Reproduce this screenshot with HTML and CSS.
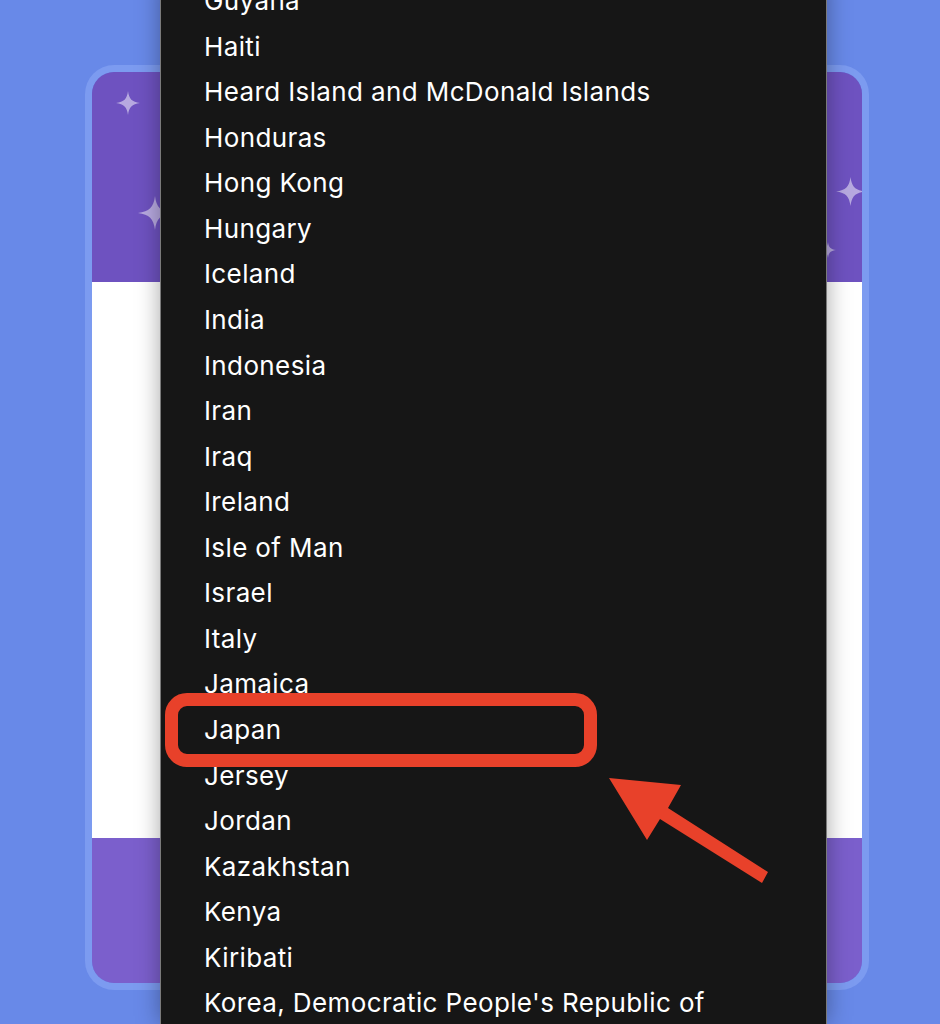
FILE: index.html
```html
<!DOCTYPE html>
<html lang="en">
<head>
    <meta charset="UTF-8">
    <title>Country picker</title>
    <link rel="stylesheet" href="styles.css">
</head>
<body>
    <div class="page">
        <div class="card">
            <div class="card-top">
                <svg class="star star-a" viewBox="0 0 24 24"><path d="M12 0C13 8 16 11 24 12C16 13 13 16 12 24C11 16 8 13 0 12C8 11 11 8 12 0Z"/></svg>
                <svg class="star star-b" viewBox="0 0 24 24"><path d="M12 0C13 8 16 11 24 12C16 13 13 16 12 24C11 16 8 13 0 12C8 11 11 8 12 0Z"/></svg>
                <svg class="star star-c" viewBox="0 0 24 24"><path d="M12 0C13 8 16 11 24 12C16 13 13 16 12 24C11 16 8 13 0 12C8 11 11 8 12 0Z"/></svg>
                <svg class="star star-d" viewBox="0 0 24 24"><path d="M12 0C13 8 16 11 24 12C16 13 13 16 12 24C11 16 8 13 0 12C8 11 11 8 12 0Z"/></svg>
            </div>
            <div class="card-body"></div>
            <div class="card-bottom"></div>
        </div>
    </div>

    <!-- open select menu -->
    <ul class="menu">
        <li>Guyana</li>
        <li>Haiti</li>
        <li>Heard Island and McDonald Islands</li>
        <li>Honduras</li>
        <li>Hong Kong</li>
        <li>Hungary</li>
        <li>Iceland</li>
        <li>India</li>
        <li>Indonesia</li>
        <li>Iran</li>
        <li>Iraq</li>
        <li>Ireland</li>
        <li>Isle of Man</li>
        <li>Israel</li>
        <li>Italy</li>
        <li>Jamaica</li>
        <li>Japan</li>
        <li>Jersey</li>
        <li>Jordan</li>
        <li>Kazakhstan</li>
        <li>Kenya</li>
        <li>Kiribati</li>
        <li>Korea, Democratic People's Republic of</li>
    </ul>

    <!-- annotation -->
    <div class="highlight"></div>
    <svg class="arrow" width="940" height="1024" viewBox="0 0 940 1024">
        <polygon points="609,778 681,785 668,808 768,872 762,883 660,819 647,840"/>
    </svg>
</body>
</html>
```

FILE: styles.css
```css
body {
    margin: 0;
    background-color: #6889e8;
    font-family: Inter, "Noto Sans", sans-serif;
    overflow: hidden;
    height: 1024px;
}
.page {
    padding: 72px 0 0 92px;
}
.card {
    width: 770px;
    border-radius: 22px;
    overflow: hidden;
    box-shadow: 0 0 0 7px #7c9bf0;
}
.card-top {
    position: relative;
    height: 210px;
    background: #6e52c0;
}
.card-body {
    height: 556px;
    background: #ffffff;
}
.card-bottom {
    height: 145px;
    background: #7b5fcc;
}
.star {
    position: absolute;
    fill: rgba(255, 255, 255, 0.5);
}
.star-a { left: 24px; top: 19px; width: 24px; height: 24px; }
.star-b { left: 46px; top: 124px; width: 34px; height: 34px; }
.star-c { left: 744px; top: 105px; width: 29px; height: 29px; }
.star-d { left: 728px; top: 170px; width: 16px; height: 16px; }

.menu {
    position: absolute;
    left: 160px;
    top: -22px;
    width: 622px;
    height: 1046px;
    overflow: hidden;
    margin: 0;
    padding: 0 0 0 43px;
    list-style: none;
    background: #161616;
    border-left: 1px solid #7a7a7a;
    border-right: 1px solid #7a7a7a;
    box-shadow: 0 0 22px rgba(0, 0, 0, 0.35);
}
.menu li {
    height: 45.57px;
    line-height: 45.57px;
    color: #ffffff;
    font-size: 26px;
    letter-spacing: 0.38px;
    white-space: nowrap;
}
.highlight {
    position: absolute;
    left: 165px;
    top: 693px;
    width: 406px;
    height: 48px;
    border: 13px solid #e8412a;
    border-radius: 22px;
}
.arrow {
    position: absolute;
    left: 0;
    top: 0;
    fill: #e8412a;
}
```
